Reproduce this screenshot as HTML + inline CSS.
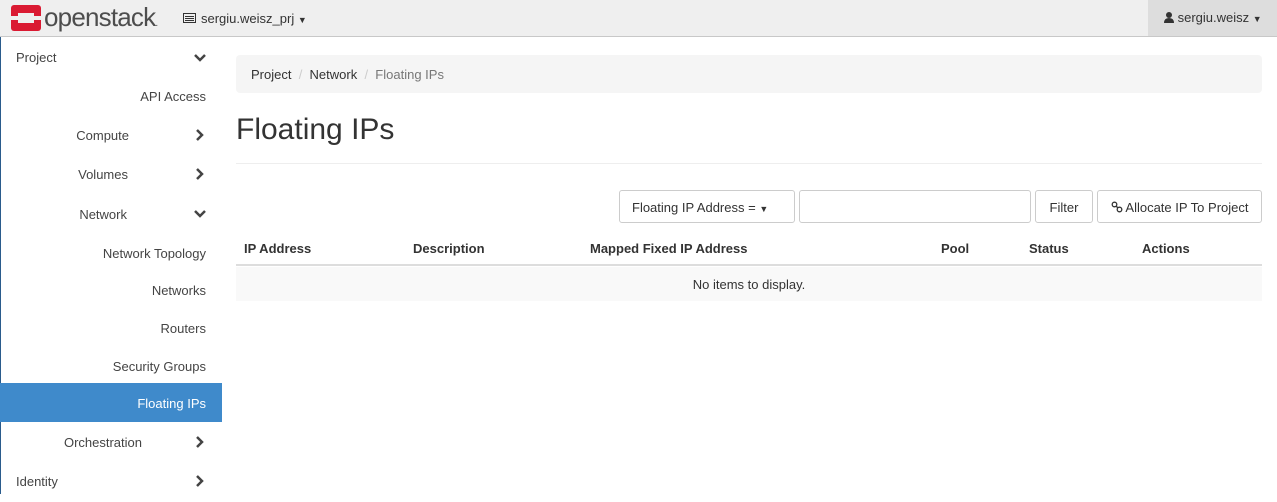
<!DOCTYPE html>
<html><head><style>
*{box-sizing:border-box;margin:0;padding:0}
body{width:1277px;height:494px;overflow:hidden;font-family:"Liberation Sans",sans-serif;font-size:13px;color:#333;background:#fff;position:relative}
.nav{position:absolute;left:0;top:0;width:1277px;height:37px;background:#efefef;border-bottom:1px solid #c8c8c8}
.user{position:absolute;right:0;top:0;width:129px;height:36px;background:#ddd;font-size:13px;line-height:36px;padding-left:16px}
.side{position:absolute;left:0;top:37px;width:221px;height:457px;border-left:1px solid #2a5b8c}
.it{position:absolute;height:38px;line-height:40px;font-size:13px;color:#444}
.chev{position:absolute;left:193px;width:14px;height:14px}
.act{position:absolute;left:-1px;top:346px;width:222px;height:39px;background:#3f8acb}
.bc{position:absolute;left:236px;top:55px;width:1026px;height:38px;background:#f5f5f5;border-radius:4px;line-height:40px;padding-left:15px;font-size:13px}
.btn{position:absolute;top:190px;height:33px;border:1px solid #ccc;border-radius:3px;background:#fff;line-height:33px;font-size:13px;color:#333}
</style></head><body>
<div class="nav">
 <svg style="position:absolute;left:11px;top:5px" width="30" height="26" viewBox="0 0 30 26"><rect width="30" height="26" rx="3" fill="#da1a32"/><rect x="7" y="8" width="16" height="10" fill="#efefef"/><rect x="0" y="11" width="7" height="4" fill="#efefef"/><rect x="23" y="11" width="7" height="4" fill="#efefef"/></svg>
 <div style="position:absolute;left:44px;top:2px;font-size:26px;color:#4d4d4d;letter-spacing:-0.8px">openstack<span style="font-size:10px">.</span></div>
 <svg style="position:absolute;left:183px;top:13px" width="13" height="10"><rect x="0.5" y="0.5" width="12" height="9" fill="none" stroke="#333"/><rect x="2" y="3" width="9" height="1" fill="#333"/><rect x="2" y="5" width="9" height="1" fill="#333"/><rect x="2" y="7" width="9" height="1" fill="#333"/></svg>
 <div style="position:absolute;left:201px;top:11px;font-size:13px">sergiu.weisz_prj <span style="font-size:9px">&#9660;</span></div>
 <div class="user"><svg width="10" height="11" style="vertical-align:-1px"><circle cx="5" cy="3" r="3" fill="#333"/><path d="M0 11 Q0 6 5 6 Q10 6 10 11Z" fill="#333"/></svg> sergiu.weisz <span style="font-size:9px">&#9660;</span></div>
</div>
<div class="side">
 <div class="act"></div>
 <div class="it" style="left:15px;top:1px">Project</div>
 <div class="it" style="right:15px;top:40px">API Access</div>
 <div class="it" style="right:92px;top:79px">Compute</div>
 <div class="it" style="right:93px;top:118px">Volumes</div>
 <div class="it" style="right:94px;top:158px">Network</div>
 <div class="it" style="right:15px;top:197px">Network Topology</div>
 <div class="it" style="right:15px;top:234px">Networks</div>
 <div class="it" style="right:15px;top:272px">Routers</div>
 <div class="it" style="right:15px;top:310px">Security Groups</div>
 <div class="it" style="right:15px;top:347px;color:#fff">Floating IPs</div>
 <div class="it" style="right:79px;top:386px">Orchestration</div>
 <div class="it" style="left:15px;top:425px">Identity</div>
</div>
<svg class="chev" style="top:51px" viewBox="0 0 14 14"><path d="M2 4 L7 9 L12 4" fill="none" stroke="#444" stroke-width="2.5"/></svg>
<svg class="chev" style="top:128px" viewBox="0 0 14 14"><path d="M4 2 L9 7 L4 12" fill="none" stroke="#444" stroke-width="2.5"/></svg>
<svg class="chev" style="top:167px" viewBox="0 0 14 14"><path d="M4 2 L9 7 L4 12" fill="none" stroke="#444" stroke-width="2.5"/></svg>
<svg class="chev" style="top:207px" viewBox="0 0 14 14"><path d="M2 4 L7 9 L12 4" fill="none" stroke="#444" stroke-width="2.5"/></svg>
<svg class="chev" style="top:435px" viewBox="0 0 14 14"><path d="M4 2 L9 7 L4 12" fill="none" stroke="#444" stroke-width="2.5"/></svg>
<svg class="chev" style="top:474px" viewBox="0 0 14 14"><path d="M4 2 L9 7 L4 12" fill="none" stroke="#444" stroke-width="2.5"/></svg>
<div class="bc">Project <span style="color:#ccc">&nbsp;/&nbsp;</span> Network <span style="color:#ccc">&nbsp;/&nbsp;</span> <span style="color:#777">Floating IPs</span></div>
<div style="position:absolute;left:236px;top:113px;font-size:30px;color:#333">Floating IPs</div>
<div style="position:absolute;left:236px;top:163px;width:1026px;height:1px;background:#eee"></div>
<div class="btn" style="left:619px;width:176px;padding-left:12px">Floating IP Address = <span style="font-size:9px">&#9660;</span></div>
<div class="btn" style="left:799px;width:232px"></div>
<div class="btn" style="left:1035px;width:58px;text-align:center">Filter</div>
<div class="btn" style="left:1097px;width:165px;text-align:center"><svg width="12" height="12" viewBox="0 0 12 12" style="vertical-align:-1px"><circle cx="3.5" cy="3.5" r="2.3" fill="none" stroke="#333" stroke-width="1.3"/><circle cx="8.5" cy="8.5" r="2.3" fill="none" stroke="#333" stroke-width="1.3"/><path d="M5 5 L7 7" stroke="#333" stroke-width="1.3"/></svg> Allocate IP To Project</div>
<div style="position:absolute;left:236px;top:231px;width:1026px;height:35px;border-bottom:2px solid #ddd;font-weight:bold;font-size:13px;line-height:36px">
 <span style="position:absolute;left:8px">IP Address</span>
 <span style="position:absolute;left:177px">Description</span>
 <span style="position:absolute;left:354px">Mapped Fixed IP Address</span>
 <span style="position:absolute;left:705px">Pool</span>
 <span style="position:absolute;left:793px">Status</span>
 <span style="position:absolute;left:906px">Actions</span>
</div>
<div style="position:absolute;left:236px;top:267px;width:1026px;height:34px;background:#f9f9f9;text-align:center;line-height:35px">No items to display.</div>
</body></html>
